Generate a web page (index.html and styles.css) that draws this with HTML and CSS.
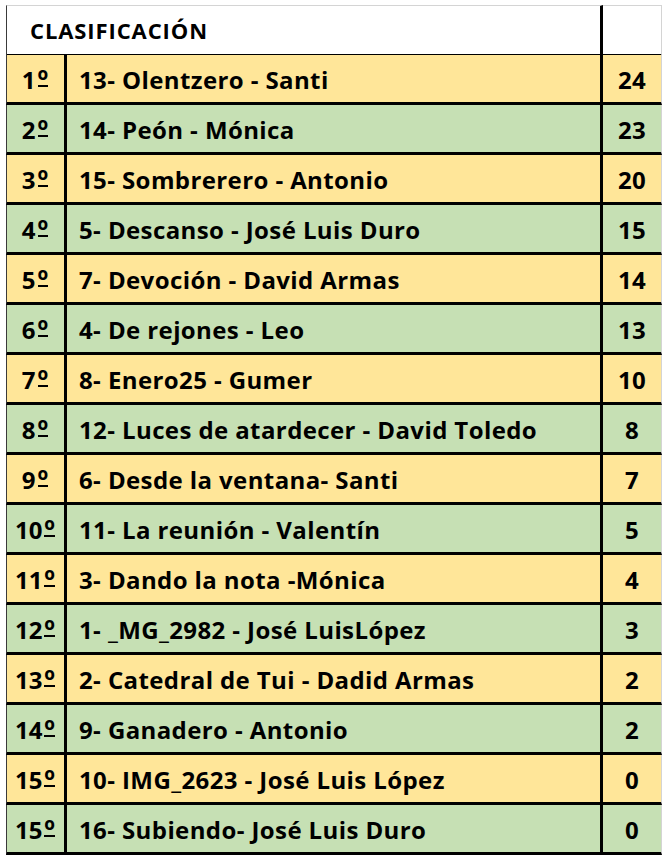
FILE: index.html
```html
<!DOCTYPE html>
<html lang="es">
<head>
<meta charset="utf-8">
<title>Clasificación</title>
<link rel="stylesheet" href="styles.css">
</head>
<body>
<div class="sheet">
  <div class="cell title">CLASIFICACIÓN</div>
  <div class="cell blank"></div>

  <div class="cell pos y">1<span class="ord">º</span></div><div class="cell name y">13- Olentzero - Santi</div><div class="cell pts y">24</div>
  <div class="cell pos g">2<span class="ord">º</span></div><div class="cell name g">14- Peón - Mónica</div><div class="cell pts g">23</div>
  <div class="cell pos y">3<span class="ord">º</span></div><div class="cell name y">15- Sombrerero - Antonio</div><div class="cell pts y">20</div>
  <div class="cell pos g">4<span class="ord">º</span></div><div class="cell name g">5- Descanso - José Luis Duro</div><div class="cell pts g">15</div>
  <div class="cell pos y">5<span class="ord">º</span></div><div class="cell name y">7- Devoción - David Armas</div><div class="cell pts y">14</div>
  <div class="cell pos g">6<span class="ord">º</span></div><div class="cell name g">4- De rejones - Leo</div><div class="cell pts g">13</div>
  <div class="cell pos y">7<span class="ord">º</span></div><div class="cell name y">8- Enero25 - Gumer</div><div class="cell pts y">10</div>
  <div class="cell pos g">8<span class="ord">º</span></div><div class="cell name g">12- Luces de atardecer - David Toledo</div><div class="cell pts g">8</div>
  <div class="cell pos y">9<span class="ord">º</span></div><div class="cell name y">6- Desde la ventana- Santi</div><div class="cell pts y">7</div>
  <div class="cell pos g">10<span class="ord">º</span></div><div class="cell name g">11- La reunión - Valentín</div><div class="cell pts g">5</div>
  <div class="cell pos y">11<span class="ord">º</span></div><div class="cell name y">3- Dando la nota -Mónica</div><div class="cell pts y">4</div>
  <div class="cell pos g">12<span class="ord">º</span></div><div class="cell name g">1- _MG_2982 - José LuisLópez</div><div class="cell pts g">3</div>
  <div class="cell pos y">13<span class="ord">º</span></div><div class="cell name y">2- Catedral de Tui - Dadid Armas</div><div class="cell pts y">2</div>
  <div class="cell pos g">14<span class="ord">º</span></div><div class="cell name g">9- Ganadero - Antonio</div><div class="cell pts g">2</div>
  <div class="cell pos y">15<span class="ord">º</span></div><div class="cell name y">10- IMG_2623 - José Luis López</div><div class="cell pts y">0</div>
  <div class="cell pos g">15<span class="ord">º</span></div><div class="cell name g">16- Subiendo- José Luis Duro</div><div class="cell pts g">0</div>
</div>
</body>
</html>
```

FILE: styles.css
```css
html, body {
  margin: 0;
  padding: 0;
  background: #ffffff;
}

.sheet {
  display: grid;
  grid-template-columns: 61px 536px 59px;
  grid-auto-rows: 50px;
  margin: 5px 0 0 6px;
  font-family: "Open Sans", Lato, sans-serif;
  font-weight: 700;
  color: #000;
}

.cell {
  box-sizing: border-box;
  display: flex;
  align-items: center;
  border-bottom: 3px solid #000;
  font-size: 24px;
  letter-spacing: 0.4px;
  white-space: nowrap;
  padding-top: 2px;
}

.title {
  grid-column: 1 / span 2;
  height: 52px;
  border-top: 1px solid #d4d4d4;
  border-left: 1px solid #3a3a3a;
  border-right: 3px solid #000;
  padding-left: 23px;
  padding-top: 0;
  font-size: 22px;
  letter-spacing: 0.9px;
}

.blank {
  height: 52px;
  border-top: 1px solid #d4d4d4;
  border-right: 1px solid #d4d4d4;
}

.sheet > .title, .sheet > .blank {
  align-self: start;
}

.pos {
  border-left: 1px solid #3a3a3a;
  border-right: 3px solid #000;
  justify-content: center;
  letter-spacing: 0;
}

.ord {
  position: relative;
  display: inline-block;
  font-size: 1.15em;
  line-height: 1;
  margin-left: 1px;
  padding: 0 1px;
}

.ord::after {
  content: "";
  position: absolute;
  left: 1px;
  right: 1px;
  bottom: 6px;
  height: 2px;
  background: #000;
}

.name {
  border-right: 3px solid #000;
  padding-left: 12px;
}

.pts {
  border-right: 1px solid #d4d4d4;
  justify-content: center;
}

.y { background: #ffe699; }
.g { background: #c6e0b4; }
```
